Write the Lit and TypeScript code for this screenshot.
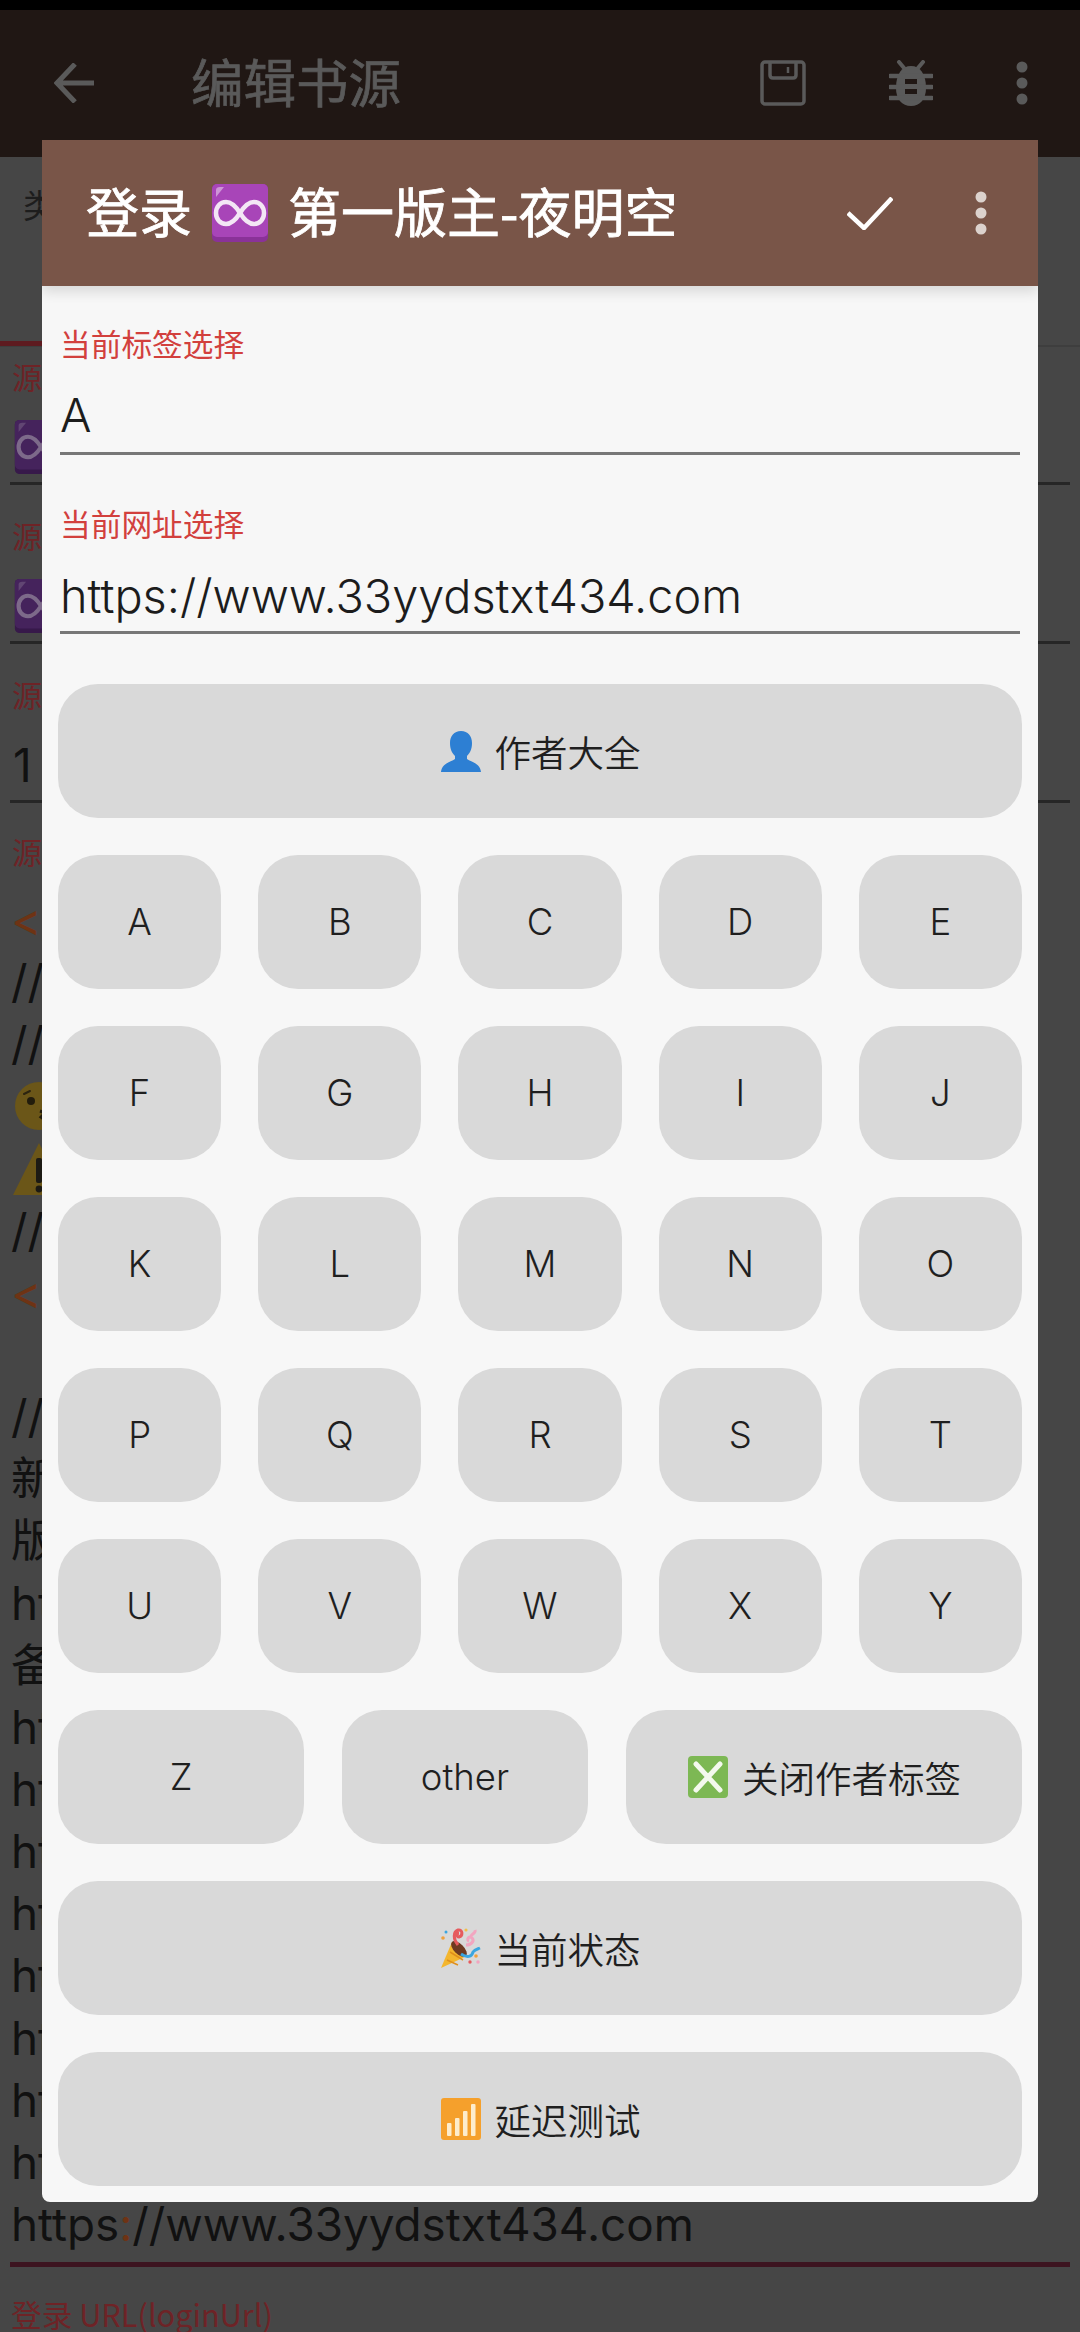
import { LitElement, html, css, svg } from "lit";
import { customElement } from "lit/decorators.js";

const infinity = (box: string, shade: string, line: string) => svg`
  <rect x="1" y="1" width="56" height="58" rx="5" fill="${shade}"/>
  <rect x="1" y="1" width="56" height="53" rx="5" fill="${box}"/>
  <path d="M5 14 L5 7 Q5 4 9 4 L13 4 Z" fill="${line}" opacity=".5"/>
  <path d="M29 30 C24 22 20 19 15 19 C9 19 5 24 5 30 C5 36 9 41 15 41 C20 41 24 38 29 30 C34 22 38 19 43 19 C49 19 53 24 53 30 C53 36 49 41 43 41 C38 41 34 38 29 30 Z" fill="none" stroke="${line}" stroke-width="4.5"/>`;

const person = html`<svg class="emoji" viewBox="0 0 42 42"><path fill="#2d7fd3" d="M21 1c7 0 11 5 11 12 0 6-2 10-5 13v3c4 3 13 4 14 13H1c1-9 10-10 14-13v-3c-3-3-5-7-5-13C10 6 14 1 21 1z"/></svg>`;

const closeBox = html`<svg class="emoji" viewBox="0 0 42 42"><rect x="1" y="0" width="40" height="42" rx="4" fill="#7db854"/><path d="M9 8 L33 34 M33 8 L9 34" stroke="#f4f9ee" stroke-width="5" stroke-linecap="round"/></svg>`;

const popper = html`<svg class="emoji" viewBox="0 0 42 42">
  <path d="M1 41 L12 15 L27 29 Z" fill="#f4b62e"/>
  <path d="M7 33 L18 38 M10 25 L23 33" stroke="#e08f1b" stroke-width="1.5"/>
  <ellipse cx="19" cy="22" rx="5" ry="10" transform="rotate(-45 19 22)" fill="#6e3b22"/>
  <path d="M18 18 C13 12 13 5 18 3 C23 2 23 9 19 10 C16 10 17 6 19 6" fill="none" stroke="#e65b5e" stroke-width="3"/>
  <path d="M26 18 C31 18 35 14 32 11 C29 8 26 13 29 14 M31 9 C33 6 36 6 35 3" fill="none" stroke="#f2a6c0" stroke-width="3"/>
  <path d="M21 27 C27 31 32 30 33 25 C35 22 38 22 40 21" fill="none" stroke="#3aa6e0" stroke-width="3"/>
  <circle cx="3" cy="11" r="1.8" fill="#f0a03c"/><circle cx="6" cy="5" r="1.5" fill="#3aa6e0"/><circle cx="26" cy="3" r="1.6" fill="#f2c04a"/>
  <circle cx="36" cy="29" r="1.8" fill="#f0a03c"/><circle cx="30" cy="35" r="1.7" fill="#e65b5e"/><circle cx="38" cy="35" r="1.7" fill="#f2a6c0"/>
</svg>`;

const signal = html`<svg class="emoji" viewBox="0 0 42 42">
  <rect x="1" y="0" width="40" height="42" rx="3" fill="#f5a02c"/>
  <rect x="7" y="25" width="4.5" height="13" rx="1" fill="#fdeccb"/>
  <rect x="15" y="20" width="4.5" height="18" rx="1" fill="#fdeccb"/>
  <rect x="23" y="13" width="4.5" height="25" rx="1" fill="#fdeccb"/>
  <rect x="31" y="6" width="4.5" height="32" rx="1" fill="#fdeccb"/>
</svg>`;

const dimInfinity = html`<svg class="inf" viewBox="0 0 58 60">${infinity("#45235c", "#37194a", "#7d6a8a")}</svg>`;

const face = html`<svg class="line-emoji" viewBox="0 0 52 52"><circle cx="26" cy="26" r="24" fill="#6b5618"/><path d="M11 14 L17 11" stroke="#2c2410" stroke-width="2" stroke-linecap="round"/><circle cx="18" cy="21" r="4" fill="#221c0c"/><circle cx="36" cy="21" r="4" fill="#221c0c"/><path d="M27 31 L32 33 L28 37 L32 40" fill="none" stroke="#221c0c" stroke-width="3"/></svg>`;

const warn = html`<svg class="line-emoji" viewBox="0 0 52 52"><path d="M26 0 L52 52 L0 52 Z" fill="#6b5618"/><rect x="23" y="15" width="6" height="25" rx="2" fill="#1c1a14"/><circle cx="26" cy="46" r="3.4" fill="#1c1a14"/></svg>`;

const URL = "https://www.33yydstxt434.com";

@customElement("app-root")
export class AppRoot extends LitElement {
  static styles = css`
    :host { display: block; width: 1080px; height: 2332px; position: relative; overflow: hidden; background: #464646; font-family: "Inter", "Noto Sans CJK SC", sans-serif; }
    * { box-sizing: border-box; }
    .status { height: 10px; background: #000; }
    .appbar { height: 147px; background: #201714; display: flex; align-items: center; color: #5a5a5a; }
    .appbar svg { display: block; flex: none; }
    .back { width: 40px; height: 40px; margin-left: 54px; margin-top: -1px; }
    .appbar-title { margin-left: 97px; font-size: 52.5px; line-height: 60px; -webkit-text-stroke: 0.7px currentColor; flex: 1; margin-top: -8px; font-family: "Noto Sans CJK SC", sans-serif; }
    .save { width: 46px; height: 46px; margin-top: -2px; }
    .bug { width: 44px; height: 46px; margin-left: 83px; margin-top: -2px; }
    .more { width: 12px; height: 44px; margin-left: 83px; margin-right: 52px; margin-top: -2px; }

    .tabs { height: 190px; border-bottom: 2px solid #3e3e3e; display: flex; }
    .tab { width: 230px; height: 189px; border-bottom: 5px solid #5e1b20; padding: 22px 0 0 23px; font-size: 33px; line-height: 50px; color: #1d1d1d; font-family: "Noto Sans CJK SC", sans-serif; }

    .field { height: 159px; margin: 0 10px; padding-top: 2px; }
    .field-label { height: 54px; line-height: 54px; font-size: 30px; color: #6e2326; padding-left: 2px; font-family: "Noto Sans CJK SC", sans-serif; }
    .field-value { height: 82px; display: flex; align-items: center; padding: 8px 0 0 3px; border-bottom: 3px solid #262626; font-size: 46px; color: #111; }
    .inf { width: 56px; height: 56px; display: block; }
    .notes-label { margin: 0 10px; }
    .code-block { margin: 11px 10px 0; font-size: 45.8px; line-height: 62.15px; color: #111; white-space: nowrap; font-family: "Inter", "Noto Sans CJK SC", sans-serif; padding-left: 1px; }
    .code-line { height: 62.15px; display: flex; align-items: center; }
    .tag { color: #6e3314; }
    .colon { color: #6e3314; }
    .line-emoji { width: 52px; height: 52px; display: block; margin-left: 2px; }
    .rule { height: 5px; margin: 6px 10px 0; background: #3c1420; }
    .foot { margin: 25px 0 0 11px; font-size: 30.7px; line-height: 44px; color: #6e2326; font-family: "Noto Sans CJK SC", sans-serif; }

    .dialog { position: absolute; left: 42px; top: 140px; width: 996px; height: 2062px; background: #f7f7f7; border-radius: 0 0 8px 8px; overflow: hidden; }
    .bar { height: 146px; background: #795548; display: flex; align-items: center; padding: 0 51px 0 44px; color: #fff; box-shadow: 0 6px 12px rgba(0,0,0,.12); position: relative; }
    .bar-title { flex: 1; display: flex; align-items: center; font-size: 53px; line-height: 60px; font-family: "Noto Sans CJK SC", sans-serif; gap: 18px; }
    .bar-title span { -webkit-text-stroke: 0.8px currentColor; position: relative; top: -3px; }
    .bar-inf { width: 60px; height: 60px; display: block; }
    .check { width: 46px; height: 33px; display: block; margin-right: 82px; }
    .bar-more { width: 12px; height: 44px; display: block; }
    .body { padding: 37px 16px 16px; }
    .label { margin: 0 2px; font-size: 30.7px; line-height: 40px; color: #d2403d; font-family: "Noto Sans CJK SC", sans-serif; }
    .input { margin: 0 2px 48px; height: 92px; display: flex; align-items: flex-end; padding-bottom: 9px; border-bottom: 3px solid #777; font-size: 46.8px; line-height: 56px; font-weight: 350; color: #1c1c1c; }
    .input.last { height: 91px; padding-bottom: 7px; margin-bottom: 50px; }
    .grid { display: grid; grid-template-columns: repeat(5, 1fr); gap: 37px; grid-auto-rows: 134px; }
    .grid.three { grid-template-columns: 246px 246px 1fr; gap: 38px; margin-top: 37px; }
    .grid.one { grid-template-columns: 1fr; }
    .gap { margin-top: 37px; }
    .btn { background: #d9d9d9; border-radius: 40px; display: flex; align-items: center; justify-content: center; gap: 13px; font-size: 36.5px; font-weight: 350; color: #1f1f1f; font-family: "Inter", "Noto Sans CJK SC", sans-serif; }
    .emoji { width: 42px; height: 42px; display: block; flex: none; }
  `;

  private btn(label: string, icon?: unknown) {
    return html`<div class="btn">${icon ?? ""}<span>${label}</span></div>`;
  }

  render() {
    const letters = "ABCDEFGHIJKLMNOPQRSTUVWXY".split("");
    const codeLines: unknown[] = [
      html`<span class="tag">&lt;/</span>`, "//", "//", face, warn, "//",
      html`<span class="tag">&lt;/</span>`, "", "//", "新网址", "版本", URL, "备用网址",
      URL, URL, URL, URL, URL, URL, URL, URL,
    ];
    return html`
      <div class="status"></div>
      <header class="appbar">
        <svg class="back" viewBox="0 0 40 40" fill="none" stroke="currentColor" stroke-width="5"><path d="M40 20 H4 M21 1 L3 20 L21 39"/></svg>
        <div class="appbar-title">编辑书源</div>
        <svg class="save" viewBox="0 0 46 46" fill="none" stroke="currentColor" stroke-width="3.5"><rect x="2" y="2" width="42" height="42" rx="3"/><path d="M10 2 V15 Q10 18 13 18 H33 Q36 18 36 15 V2"/><path d="M28 7 V13" stroke-width="2.5"/></svg>
        <svg class="bug" viewBox="0 0 44 46" fill="currentColor"><path d="M10 2 L15 8 M34 2 L29 8" stroke="currentColor" stroke-width="4" stroke-linecap="round"/><path d="M22 6 C31 6 37 14 37 28 C37 39 31 46 22 46 C13 46 7 39 7 28 C7 14 13 6 22 6 Z"/><path d="M1 16 H43 M1 27 H43 M1 38 H43" stroke="currentColor" stroke-width="4.5" stroke-linecap="round"/><rect x="16" y="19" width="12" height="5" fill="#201714"/><rect x="16" y="29" width="12" height="5" fill="#201714"/></svg>
        <svg class="more" viewBox="0 0 12 44" fill="currentColor"><circle cx="6" cy="6" r="5.5"/><circle cx="6" cy="22" r="5.5"/><circle cx="6" cy="38" r="5.5"/></svg>
      </header>
      <div class="tabs"><div class="tab">类别</div></div>
      <div class="field"><div class="field-label">源名称</div><div class="field-value">${dimInfinity}</div></div>
      <div class="field"><div class="field-label">源分组</div><div class="field-value">${dimInfinity}</div></div>
      <div class="field"><div class="field-label">源权重</div><div class="field-value">1</div></div>
      <div class="field-label notes-label">源注释</div>
      <div class="code-block">
        ${codeLines.map((l) => html`<div class="code-line">${l}</div>`)}
        <div class="code-line"><span>https<span class="colon">:</span>//www.33yydstxt434.com</span></div>
      </div>
      <div class="rule"></div>
      <div class="foot">登录 URL(loginUrl)</div>

      <section class="dialog">
        <div class="bar">
          <div class="bar-title"><span>登录</span><svg class="bar-inf" viewBox="0 0 58 60">${infinity("#a845b8", "#8a3298", "#f3e6f5")}</svg><span>第一版主-夜明空</span></div>
          <svg class="check" viewBox="0 0 46 33" fill="none" stroke="#fff" stroke-width="4.5"><path d="M1 16 L17 31 L45 1"/></svg>
          <svg class="bar-more" viewBox="0 0 12 44" fill="#dcd2cd"><circle cx="6" cy="6" r="5.5"/><circle cx="6" cy="22" r="5.5"/><circle cx="6" cy="38" r="5.5"/></svg>
        </div>
        <div class="body">
          <div class="label">当前标签选择</div>
          <div class="input">A</div>
          <div class="label">当前网址选择</div>
          <div class="input last">${URL}</div>
          <div class="grid one">${this.btn("作者大全", person)}</div>
          <div class="grid gap">${letters.map((l) => this.btn(l))}</div>
          <div class="grid three">${this.btn("Z")}${this.btn("other")}${this.btn("关闭作者标签", closeBox)}</div>
          <div class="grid one gap">${this.btn("当前状态", popper)}${this.btn("延迟测试", signal)}</div>
        </div>
      </section>
    `;
  }
}
